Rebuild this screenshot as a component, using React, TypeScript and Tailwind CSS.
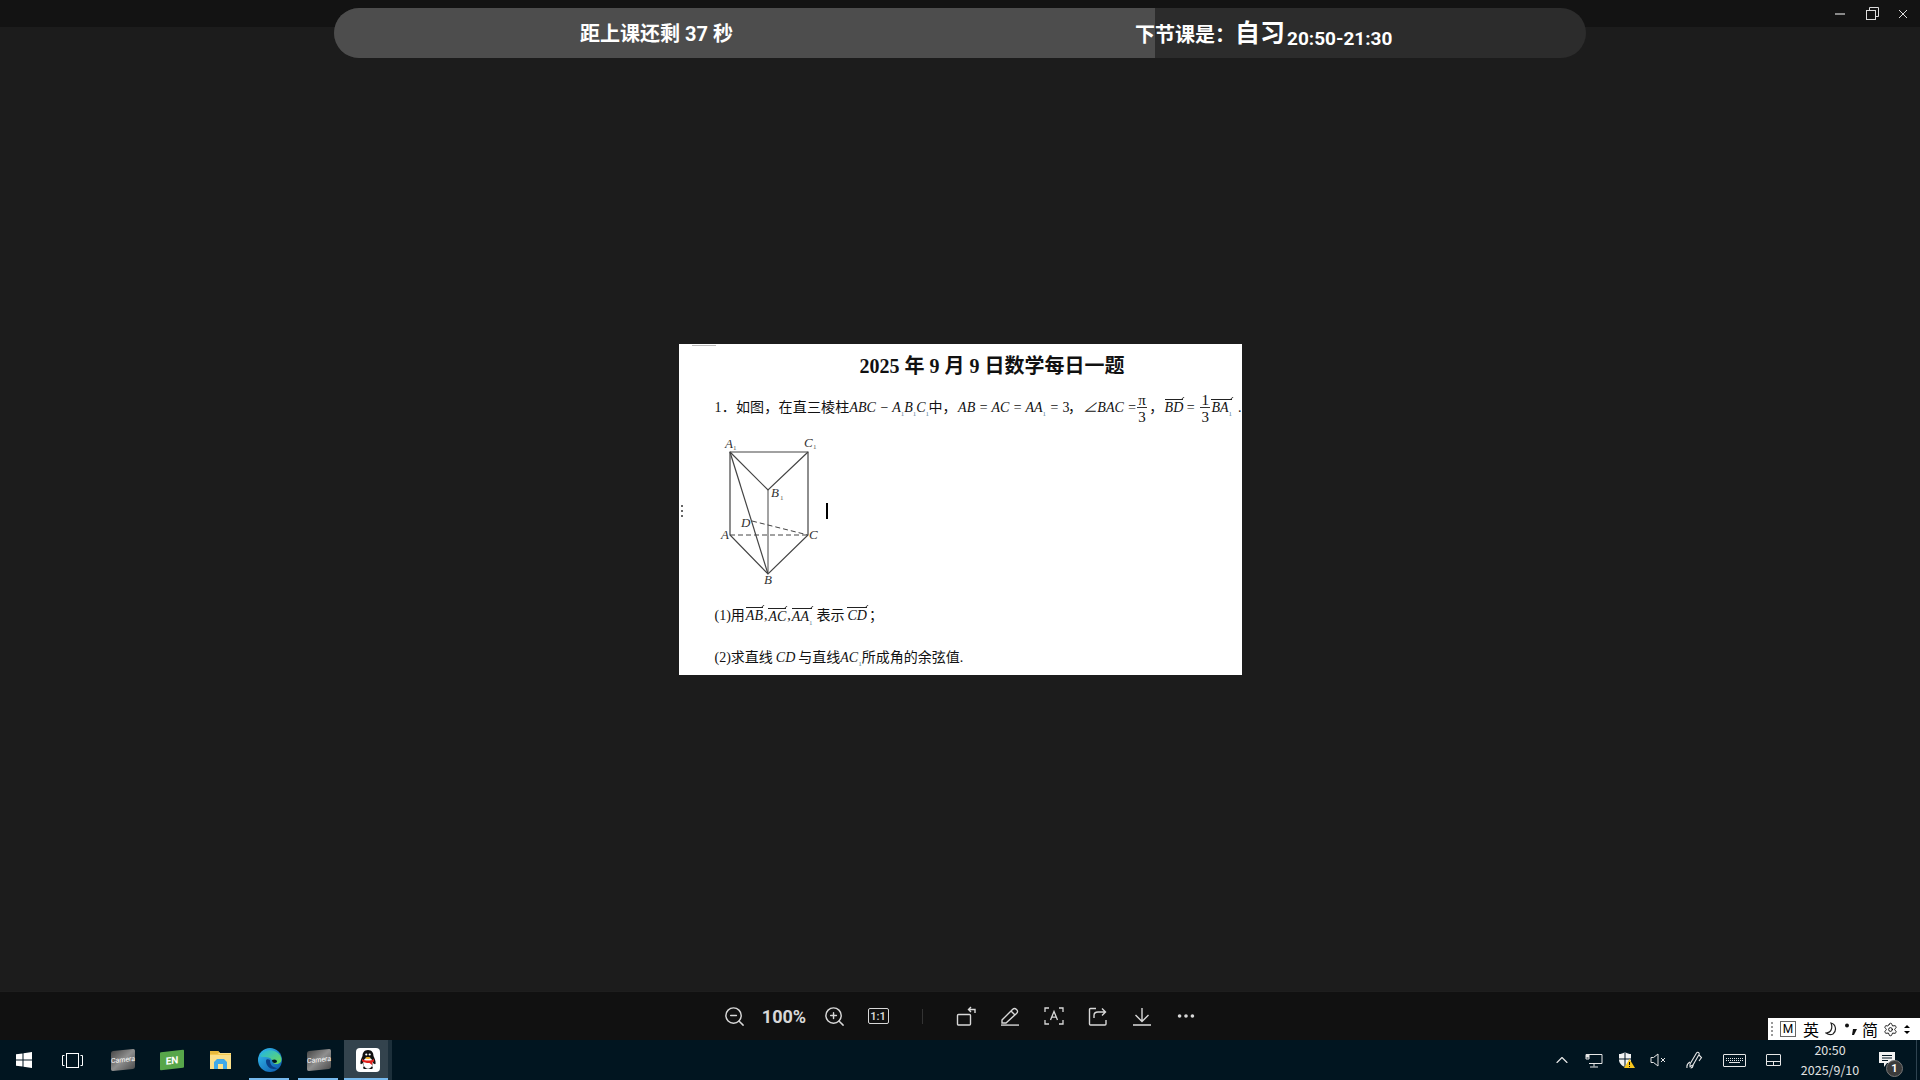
import { ChevronUp, MoreHorizontal, Settings, ZoomIn, ZoomOut } from "lucide-react";
import type { ReactNode } from "react";

const Sub = ({ children = "1" }: { children?: ReactNode }) => (
  <span className="text-[7px] not-italic text-[#5b7f99] relative top-[4px] leading-none">{children}</span>
);

const Vec = ({ children }: { children: ReactNode }) => (
  <span className="relative inline-block border-t border-[#222] italic text-[14px] leading-[15px] mt-[1px]">
    <span className="absolute right-0 -top-[3px] w-[4px] h-[3px] border-r border-[#222] -skew-x-[45deg]" />
    {children}
  </span>
);

const Frac = ({ top }: { top: string }) => (
  <span className="flex flex-col items-center w-[11px] text-[15px] leading-[18px]">
    <span className="border-b border-[#333] w-full text-center h-[17px]">{top}</span>
    <span className="h-[17px]">3</span>
  </span>
);

const Figure = () => (
  <svg width="120" height="156" viewBox="0 -6 120 156" className="shrink-0">
    <g stroke="#444" strokeWidth="1.2" fill="none">
      <path d="M15 11H93V94L53 133L15 94Z" />
      <path d="M15 11L53 49L93 11" />
      <path d="M53 49V133" stroke="#666" />
      <path d="M15 11L53 133" />
      <path d="M15 94H93M37 80L93 94" strokeDasharray="5 3" strokeWidth="1" />
    </g>
    <g fontFamily="Liberation Serif, serif" fontStyle="italic" fontSize="13" fill="#333">
      <text x="10" y="7">A</text>
      <text x="89" y="6">C</text>
      <text x="56" y="56">B</text>
      <text x="26" y="86">D</text>
      <text x="6" y="98">A</text>
      <text x="94" y="98">C</text>
      <text x="49" y="143">B</text>
    </g>
    <g fontFamily="Liberation Serif, serif" fontSize="7" fill="#555">
      <text x="18" y="9">1</text>
      <text x="98" y="8">1</text>
      <text x="65" y="59">1</text>
    </g>
  </svg>
);

const Doc = () => (
  <div className="relative w-[563px] h-[331px] bg-white text-[#111] flex flex-col [font-family:'Liberation_Serif','Noto_Sans_CJK_SC',serif]">
    <div className="absolute left-[13px] top-[1px] w-[24px] h-px bg-[#bbb]" />
    <div className="absolute left-[2px] top-[161px] flex flex-col gap-[3px]">
      <span className="w-[2px] h-[2px] bg-[#666]" />
      <span className="w-[2px] h-[2px] bg-[#666]" />
      <span className="w-[2px] h-[2px] bg-[#666]" />
    </div>
    <div className="h-[44px] pl-[181px] pt-[8px] text-[20px] leading-[28px] font-bold whitespace-nowrap">
      2025 年 9 月 9 日数学每日一题
    </div>
    <div className="h-[40px] pl-[36px] flex items-center text-[14px] whitespace-nowrap">
      <span className="w-[136px] tracking-[0.2px]">1．如图，在直三棱柱</span>
      <span className="w-[79px] italic">ABC − A<Sub />B<Sub />C<Sub /></span>
      <span className="w-[31px]">中，</span>
      <span className="w-[110px] italic">AB = AC = AA<Sub /> = <span className="not-italic">3</span></span>
      <span className="w-[16px]">，</span>
      <span className="w-[56px] italic">∠BAC =</span>
      <Frac top="π" />
      <span className="w-[18px] pl-[2px]">，</span>
      <span className="w-[37px]"><Vec>BD</Vec> =</span>
      <Frac top="1" />
      <span className="ml-[1px]"><Vec>BA<Sub /></Vec></span>
      <span className="ml-[6px]">.</span>
    </div>
    <div className="h-[168px] pl-[36px] pt-[7px] flex items-start">
      <Figure />
      <span className="w-[2px] h-[16px] bg-black mt-[68px] -ml-[9px]" />
    </div>
    <div className="h-[38px] pl-[36px] pt-[2px] flex items-center text-[14px] whitespace-nowrap">
      (1)用<span className="ml-[1px]"><Vec>AB</Vec></span><span className="mx-[1px]">,</span><Vec>AC</Vec><span className="mx-[1px]">,</span><Vec>AA<Sub /></Vec>
      <span className="ml-[4px]">表示</span>
      <span className="ml-[3px]"><Vec>CD</Vec></span>
      <span className="ml-[2px]">；</span>
    </div>
    <div className="h-[41px] pl-[36px] pt-[6px] flex items-center text-[14px] whitespace-nowrap">
      (2)求直线<span className="italic mx-[3px]">CD</span>与直线<span className="italic">AC<Sub /></span>所成角的余弦值.
    </div>
  </div>
);

const TopPill = () => (
  <div className="absolute left-[334px] top-[8px] w-[1252px] h-[50px] rounded-[25px] overflow-hidden bg-[#2c2c2c] flex items-center text-white font-bold [font-family:'Roboto','Noto_Sans_CJK_SC',sans-serif] whitespace-nowrap">
    <div className="absolute left-0 top-0 bottom-0 w-[821px] bg-[#4d4d4d]" />
    <span className="relative ml-[246px] w-[555px] text-[20px] mt-[2px]">距上课还剩 37 秒</span>
    <span className="relative text-[20px] mt-[3px]">下节课是：</span>
    <span className="relative text-[25px] leading-none">自习</span>
    <span className="relative text-[19px] ml-[2px] mt-[12px]">20:50-21:30</span>
  </div>
);

const ToolBtn = ({ children, w = "w-[44px]" }: { children: ReactNode; w?: string }) => (
  <div className={`${w} h-[50px] flex items-center justify-center text-[#d8d8d8]`}>{children}</div>
);

const Toolbar = () => (
  <div className="h-[49px] bg-[#111111] border-t border-[#1e1e1e] flex items-center justify-center">
    <ToolBtn><ZoomOut size={23} strokeWidth={1.5} /></ToolBtn>
    <ToolBtn w="w-[56px]"><span className="text-[18px] font-bold [font-family:'Roboto',sans-serif]">100%</span></ToolBtn>
    <ToolBtn><ZoomIn size={23} strokeWidth={1.5} /></ToolBtn>
    <ToolBtn>
      <span className="w-[21px] h-[16px] border-[1.5px] border-[#d8d8d8] rounded-[2px] flex items-center justify-center text-[11px] leading-none font-semibold [font-family:'Roboto',sans-serif]">1:1</span>
    </ToolBtn>
    <ToolBtn w="w-[44px]"><span className="w-px h-[15px] bg-[#333]" /></ToolBtn>
    <ToolBtn>
      <svg width="22" height="22" viewBox="0 0 22 22" fill="none" stroke="currentColor" strokeWidth="1.4">
        <rect x="2.500" y="9.500" width="13" height="10.500" rx="1" />
        <path d="M20 8V4.500H13.500M16 2L13.500 4.500L16 7" />
      </svg>
    </ToolBtn>
    <ToolBtn>
      <svg width="20" height="20" viewBox="0 0 20 20" fill="none" stroke="currentColor" strokeWidth="1.4">
        <path d="M2 14L12.500 3.500C14 2 15 2 16.500 3.500C18 5 18 6 16.500 7.500L6 17H2Z" />
        <path d="M11 5L15 9" />
        <path d="M1 19.200H19" stroke="#aaa" strokeWidth="2" />
      </svg>
    </ToolBtn>
    <ToolBtn>
      <svg width="20" height="20" viewBox="0 0 20 20" fill="none" stroke="currentColor" strokeWidth="1.3">
        <path d="M1 6V2H5M15 2H19V6M19 14V18H15M5 18H1V14" />
        <path d="M6.500 14L10 5.500L13.500 14M7.600 11.200H12.400" />
      </svg>
    </ToolBtn>
    <ToolBtn>
      <svg width="20" height="20" viewBox="0 0 20 20" fill="none" stroke="currentColor" strokeWidth="1.4">
        <path d="M8 2.500H2.500A1 1 0 0 0 1.500 3.500V18A1 1 0 0 0 2.500 19H17A1 1 0 0 0 18 18V14" />
        <path d="M6 12V9.500C6 7 8 6 10 6H17.500M14 2.500L17.500 6L14 9.500" />
      </svg>
    </ToolBtn>
    <ToolBtn>
      <div className="flex flex-col items-center">
        <svg width="18" height="16" viewBox="0 0 18 16" fill="none" stroke="currentColor" strokeWidth="1.4">
          <path d="M9 1V14.500M2.500 8L9 14.500L15.500 8" />
        </svg>
        <span className="w-[18px] h-[2px] bg-[#aaa] mt-[1px]" />
      </div>
    </ToolBtn>
    <ToolBtn><MoreHorizontal size={22} strokeWidth={2} /></ToolBtn>
  </div>
);

const CameraIcon = () => (
  <div className="w-[24px] h-[20px] rounded-[2px] -skew-y-6 bg-gradient-to-br from-[#4a4a4a] via-[#8f8f8f] to-[#4f4f4f] flex items-center justify-center text-[7px] text-white leading-none [font-family:'Roboto',sans-serif]">
    Camera
  </div>
);

const TaskItem = ({ children, open }: { children: ReactNode; open?: boolean }) => (
  <div className="relative w-[49px] h-[40px] flex items-center justify-center">
    {children}
    {open && <span className="absolute bottom-0 h-[2px] bg-[#76b9ed] left-[4px] w-[40px]" />}
  </div>
);

const EdgeIcon = () => (
  <svg width="24" height="24" viewBox="0 0 24 24">
    <defs>
      <linearGradient id="edgeA" x1="0" y1="0" x2="1" y2="1">
        <stop offset="0" stopColor="#35c1f1" />
        <stop offset="1" stopColor="#0b53a8" />
      </linearGradient>
      <linearGradient id="edgeB" x1="0" y1="0" x2="1" y2="1">
        <stop offset="0" stopColor="#1fb5e8" />
        <stop offset="1" stopColor="#6fdc52" />
      </linearGradient>
    </defs>
    <circle cx="12" cy="12" r="12" fill="url(#edgeA)" />
    <path d="M2 8C5 1 17 0 22 7C25 12 23 16 18 16C14 16 15 12 12 10C8 8 4 10 2 8Z" fill="url(#edgeB)" />
    <path d="M8 13C8 19 14 23 20 20C16 20 12 18 12 12C10 11 8 11 8 13Z" fill="#0a3f86" />
    <path d="M14 12C16 11 19 11 19 14C17 16 14 15 14 12Z" fill="#011520" />
  </svg>
);

const FolderIcon = () => (
  <svg width="22" height="20" viewBox="0 0 22 20">
    <path d="M0 1H8L10 3H21V19H0Z" fill="#fbe08a" />
    <path d="M0 1H8L10 3H9L7.500 4H0Z" fill="#e8b93c" />
    <path d="M0 4H21V5H0Z" fill="#f5c94f" />
    <path d="M4 19V12L7 9H14L17 12V19H13V14H8V19Z" fill="#3fa9e8" />
  </svg>
);

const QQIcon = () => (
  <div className="w-[24px] h-[24px] bg-white rounded-[4px] flex items-center justify-center">
    <svg width="20" height="22" viewBox="0 0 20 22">
      <path d="M10 1C6 1 4.500 4 4.500 7C3.500 9 2 12 2.500 15C3.500 15.500 4 14.500 4.500 14C5 16 6 17 6 17C5 18 4.500 20 7 20C8.500 20 9.500 19.500 10 19.500C10.500 19.500 11.500 20 13 20C15.500 20 15 18 14 17C14 17 15 16 15.500 14C16 14.500 16.500 15.500 17.500 15C18 12 16.500 9 15.500 7C15.500 4 14 1 10 1Z" fill="#111" />
      <ellipse cx="10" cy="14" rx="4.800" ry="5.500" fill="#fff" />
      <path d="M4 10C7 12 13 12 16 10L16 12.500C15 13 14.500 13 14.500 13L14 16L11.500 14C8 14 5.500 13.500 4 12Z" fill="#e0201b" />
      <ellipse cx="10" cy="9" rx="2.600" ry="1.100" fill="#f3b21b" />
      <circle cx="8.300" cy="5.500" r="1.100" fill="#fff" />
      <circle cx="11.700" cy="5.500" r="1.100" fill="#fff" />
    </svg>
  </div>
);

const Tray = () => (
  <div className="flex items-center h-full text-[#e6e6e6]">
    <div className="w-[32px] flex justify-center"><ChevronUp size={20} strokeWidth={1.4} /></div>
    <div className="w-[32px] flex justify-center">
      <svg width="18" height="15" viewBox="0 0 18 15" fill="none" stroke="currentColor" strokeWidth="1">
        <path d="M4 1.500H17V10.500H4M4 1.500H1V6H4ZM9 10.500V13.500M5 14H13" />
        <rect x="1.500" y="2" width="2" height="2" fill="currentColor" />
      </svg>
    </div>
    <div className="w-[32px] flex justify-center">
      <svg width="17" height="16" viewBox="0 0 17 16">
        <path d="M1 2C3 2 5 1.500 7 0C9 1.500 11 2 13 2V8C13 11 10 14 7 15C4 14 1 11 1 8Z" fill="#f2f2f2" />
        <path d="M7 0V15M1 7H13" stroke="#011520" strokeWidth="1" />
        <path d="M11.500 7L17 16H6Z" fill="#f8c61c" />
        <path d="M11.500 10V13M11.500 14V15" stroke="#111" strokeWidth="1" />
      </svg>
    </div>
    <div className="w-[31px] flex justify-center">
      <svg width="16" height="14" viewBox="0 0 16 14" fill="none" stroke="currentColor" strokeWidth="1">
        <path d="M1 4.500H3.500L8 1V13L3.500 9.500H1Z" />
        <path d="M11 5L15 9M15 5L11 9" />
      </svg>
    </div>
    <div className="w-[42px] flex justify-center">
      <svg width="17" height="18" viewBox="0 0 17 18" fill="none" stroke="currentColor" strokeWidth="1.100">
        <path d="M4 13L10.500 2C11.500 0.500 14 1.500 13 3.500L7 14L4 15.500Z" />
        <path d="M13 4L15.500 6.500L13 10M1 17C0.500 14 2 12 4 11M7 14C7 16 6 17 4.500 17" />
      </svg>
    </div>
    <div className="w-[38px] flex justify-center">
      <div className="w-[23px] h-[13px] border border-[#e6e6e6] rounded-[1px] flex flex-col justify-center items-center gap-[1px]">
        <span className="w-[17px] border-t border-dotted border-[#e6e6e6]" />
        <span className="w-[17px] border-t border-dotted border-[#e6e6e6]" />
        <span className="w-[11px] border-t border-[#e6e6e6]" />
      </div>
    </div>
    <div className="w-[40px] flex justify-center">
      <div className="w-[15px] h-[12px] border border-[#e6e6e6] rounded-[1px] flex flex-col justify-end">
        <div className="h-[4px] border-t border-[#e6e6e6] flex justify-center">
          <span className="w-px h-full bg-[#e6e6e6]" />
        </div>
      </div>
    </div>
    <div className="w-[74px] flex flex-col items-center text-[12.500px] leading-[20px] text-[#e2e2e2] [font-family:'Noto_Sans_CJK_SC',sans-serif]">
      <span>20:50</span>
      <span>2025/9/10</span>
    </div>
    <div className="w-[42px] pl-[12px] flex relative">
      <svg width="16" height="16" viewBox="0 0 16 16">
        <path d="M0 0H16V11H8L5 15V11H0Z" fill="#f2f2f2" />
        <path d="M3 3.500H13M3 6H13M3 8.500H9" stroke="#011520" strokeWidth="1" />
      </svg>
      <span className="absolute left-[19px] top-[8px] w-[17px] h-[17px] rounded-full bg-[#3b3b3b] border border-[#777] text-[11px] leading-none font-bold text-white flex items-center justify-center [font-family:'Roboto',sans-serif]">1</span>
    </div>
    <div className="w-[11px] h-full flex justify-end pr-[3px]"><span className="w-px h-full bg-[#2f4350]" /></div>
  </div>
);

const Ime = () => (
  <div className="absolute right-0 top-[1018px] w-[152px] h-[22px] bg-white flex items-center text-black text-[16px] leading-none [font-family:'Noto_Sans_CJK_SC',sans-serif]">
    <span className="w-[3px] h-[14px] ml-[3px] border-l-2 border-dotted border-[#999]" />
    <span className="ml-[6px] w-[16px] h-[16px] border border-[#666] flex items-center justify-center text-[12px] [font-family:'Roboto',sans-serif]">M</span>
    <span className="ml-[7px] w-[16px]">英</span>
    <span className="ml-[5px] w-[16px] flex justify-center">
      <svg width="14" height="14" viewBox="0 0 14 14" fill="none" stroke="#222" strokeWidth="1.200">
        <path d="M6 1C11 2 12 9 8 12C5 13.500 3 12.500 1 11C6 11 8 6 6 1Z" />
      </svg>
    </span>
    <span className="ml-[3px] w-[16px] flex justify-center">
      <svg width="14" height="12" viewBox="0 0 14 12" fill="#111">
        <circle cx="3" cy="2.500" r="2" />
        <path d="M9 6L13 6L10 12L8 12Z" />
      </svg>
    </span>
    <span className="ml-[3px] w-[16px]">简</span>
    <span className="ml-[4px] w-[16px] flex justify-center"><Settings size={15} strokeWidth={1.4} /></span>
    <span className="ml-[6px] flex flex-col items-center gap-[3px]">
      <span className="w-0 h-0 border-x-[3px] border-x-transparent border-b-[3px] border-b-black" />
      <span className="w-0 h-0 border-x-[3px] border-x-transparent border-t-[3px] border-t-black" />
    </span>
  </div>
);

const App = () => (
  <div className="relative w-[1920px] h-[1080px] overflow-hidden bg-[#1c1c1c] flex flex-col">
    <div className="h-[27px] bg-[#131313] flex items-center justify-end text-[#ddd]">
      <div className="w-[32px] flex justify-center"><span className="w-[10px] h-[2px] bg-[#888]" /></div>
      <div className="w-[32px] flex justify-center">
        <svg width="13" height="13" viewBox="0 0 13 13" fill="none" stroke="currentColor" strokeWidth="1">
          <rect x="0.500" y="3.500" width="9" height="9" />
          <path d="M3.500 3.500V0.500H12.500V9.500H9.500" />
        </svg>
      </div>
      <div className="w-[32px] flex justify-center pr-[2px]">
        <svg width="10" height="10" viewBox="0 0 10 10" stroke="currentColor" strokeWidth="1">
          <path d="M1 1L9 9M9 1L1 9" />
        </svg>
      </div>
    </div>
    <div className="flex-1 flex items-center justify-center">
      <Doc />
    </div>
    <Toolbar />
    <div className="h-[40px] bg-[#011520] flex items-center justify-between">
      <div className="flex items-center h-full">
        <div className="w-[48px] flex justify-center">
          <svg width="16" height="16" viewBox="0 0 16 16" fill="#fff">
            <path d="M0 2.300L6.500 1.400V7.500H0ZM7.500 1.300L16 0V7.500H7.500ZM0 8.500H6.500V14.600L0 13.700ZM7.500 8.500H16V16L7.500 14.700Z" />
          </svg>
        </div>
        <div className="w-[48px] flex justify-center mr-[2px]">
          <svg width="21" height="15" viewBox="0 0 21 15" fill="none" stroke="#fff" strokeWidth="1">
            <rect x="4.500" y="0.500" width="12" height="14" />
            <path d="M2.500 2.500H0.500V12.500H2.500M18.500 2.500H20.500V12.500H18.500" />
          </svg>
        </div>
        <TaskItem><CameraIcon /></TaskItem>
        <TaskItem>
          <div className="w-[24px] h-[18px] rounded-[1px] -skew-y-6 bg-[#57a64a] flex items-center justify-center text-white text-[10px] font-bold [font-family:'Roboto',sans-serif]">EN</div>
        </TaskItem>
        <TaskItem><FolderIcon /></TaskItem>
        <TaskItem open><EdgeIcon /></TaskItem>
        <TaskItem open><CameraIcon /></TaskItem>
        <div className="relative ml-[1px] pl-[4px] w-[44px] h-[40px] bg-[#33434d] flex items-center justify-center">
          <QQIcon />
          <span className="absolute bottom-0 left-0 right-0 h-[2px] bg-[#76b9ed]" />
        </div>
        <span className="w-[4px] h-full bg-[#1c2f3a]" />
      </div>
      <Tray />
    </div>
    <TopPill />
    <Ime />
  </div>
);

export default App;
